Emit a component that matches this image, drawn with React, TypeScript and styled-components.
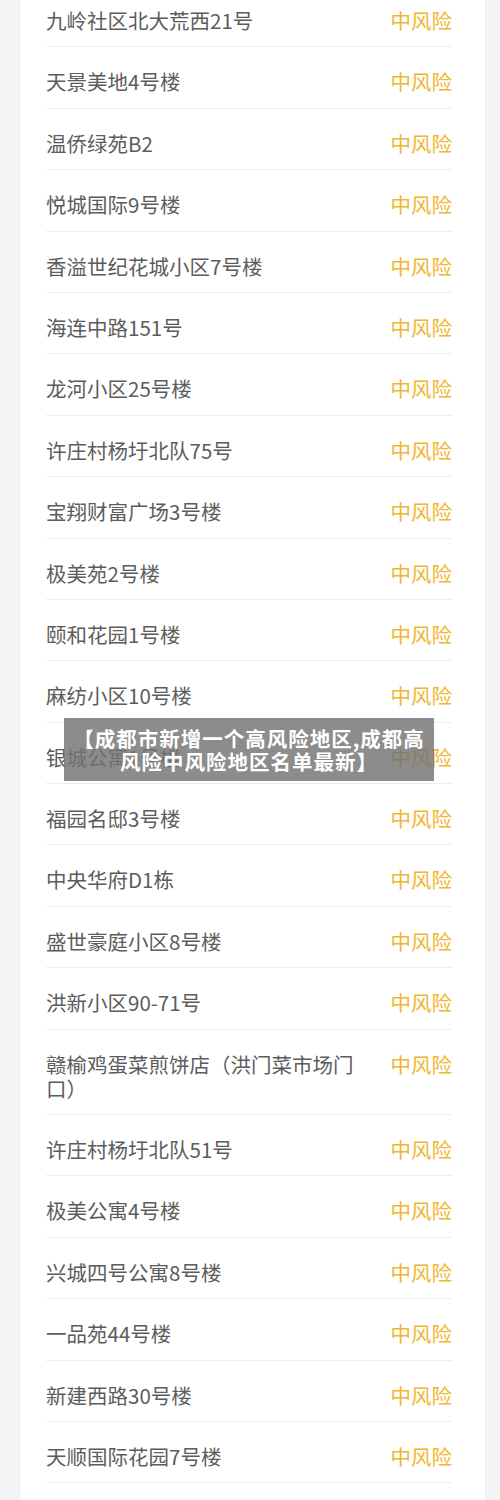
import React from "react";
import styled, { createGlobalStyle } from "styled-components";

const GlobalStyle = createGlobalStyle`
  html, body {
    margin: 0;
    padding: 0;
    background: #f5f5f5;
  }
  body {
    font-family: "Noto Sans CJK SC", "Noto Sans", sans-serif;
  }
`;

const Page = styled.div`
  position: relative;
  width: 500px;
  min-height: 1500px;
  background: #f5f5f5;
  padding: 0 15px 0 20px;
  box-sizing: border-box;
  overflow: hidden;
`;

const Card = styled.div`
  background: #ffffff;
  box-shadow: 0 0 3px rgba(0, 0, 0, 0.05);
  padding: 0 33px 40px 26px;
  min-height: 1500px;
  box-sizing: border-box;
`;

const Row = styled.div`
  display: flex;
  align-items: flex-start;
  justify-content: space-between;
  gap: 30px;
  padding: 22px 0 14.4px;
  border-bottom: 1px solid #ededed;

  &:first-child {
    padding-top: 8px;
  }
`;

const Name = styled.div`
  flex: 1;
  min-width: 0;
  font-size: 20.5px;
  line-height: 24px;
  color: #5c5c5c;
`;

const Risk = styled.div`
  flex: none;
  font-size: 20.5px;
  line-height: 24px;
  color: #f1b62e;
`;

const Banner = styled.div`
  position: absolute;
  left: 64px;
  top: 718px;
  width: 370px;
  height: 63px;
  background: rgba(115, 115, 115, 0.82);
  display: flex;
  align-items: center;
  justify-content: center;
  text-align: center;
  color: #ffffff;
  font-weight: 700;
  font-size: 20.5px;
  line-height: 23px;
  letter-spacing: 1px;
`;

const items: string[] = [
  "九岭社区北大荒西21号",
  "天景美地4号楼",
  "温侨绿苑B2",
  "悦城国际9号楼",
  "香溢世纪花城小区7号楼",
  "海连中路151号",
  "龙河小区25号楼",
  "许庄村杨圩北队75号",
  "宝翔财富广场3号楼",
  "极美苑2号楼",
  "颐和花园1号楼",
  "麻纺小区10号楼",
  "银城公寓1号楼",
  "福园名邸3号楼",
  "中央华府D1栋",
  "盛世豪庭小区8号楼",
  "洪新小区90-71号",
  "赣榆鸡蛋菜煎饼店（洪门菜市场门口）",
  "许庄村杨圩北队51号",
  "极美公寓4号楼",
  "兴城四号公寓8号楼",
  "一品苑44号楼",
  "新建西路30号楼",
  "天顺国际花园7号楼",
];

export default function App() {
  return (
    <>
      <GlobalStyle />
      <Page>
        <Card>
          {items.map((name, i) => (
            <Row key={i}>
              <Name>{name}</Name>
              <Risk>中风险</Risk>
            </Row>
          ))}
        </Card>
        <Banner>
          <div>
            【成都市新增一个高风险地区,成都高
            <br />
            风险中风险地区名单最新】
          </div>
        </Banner>
      </Page>
    </>
  );
}
